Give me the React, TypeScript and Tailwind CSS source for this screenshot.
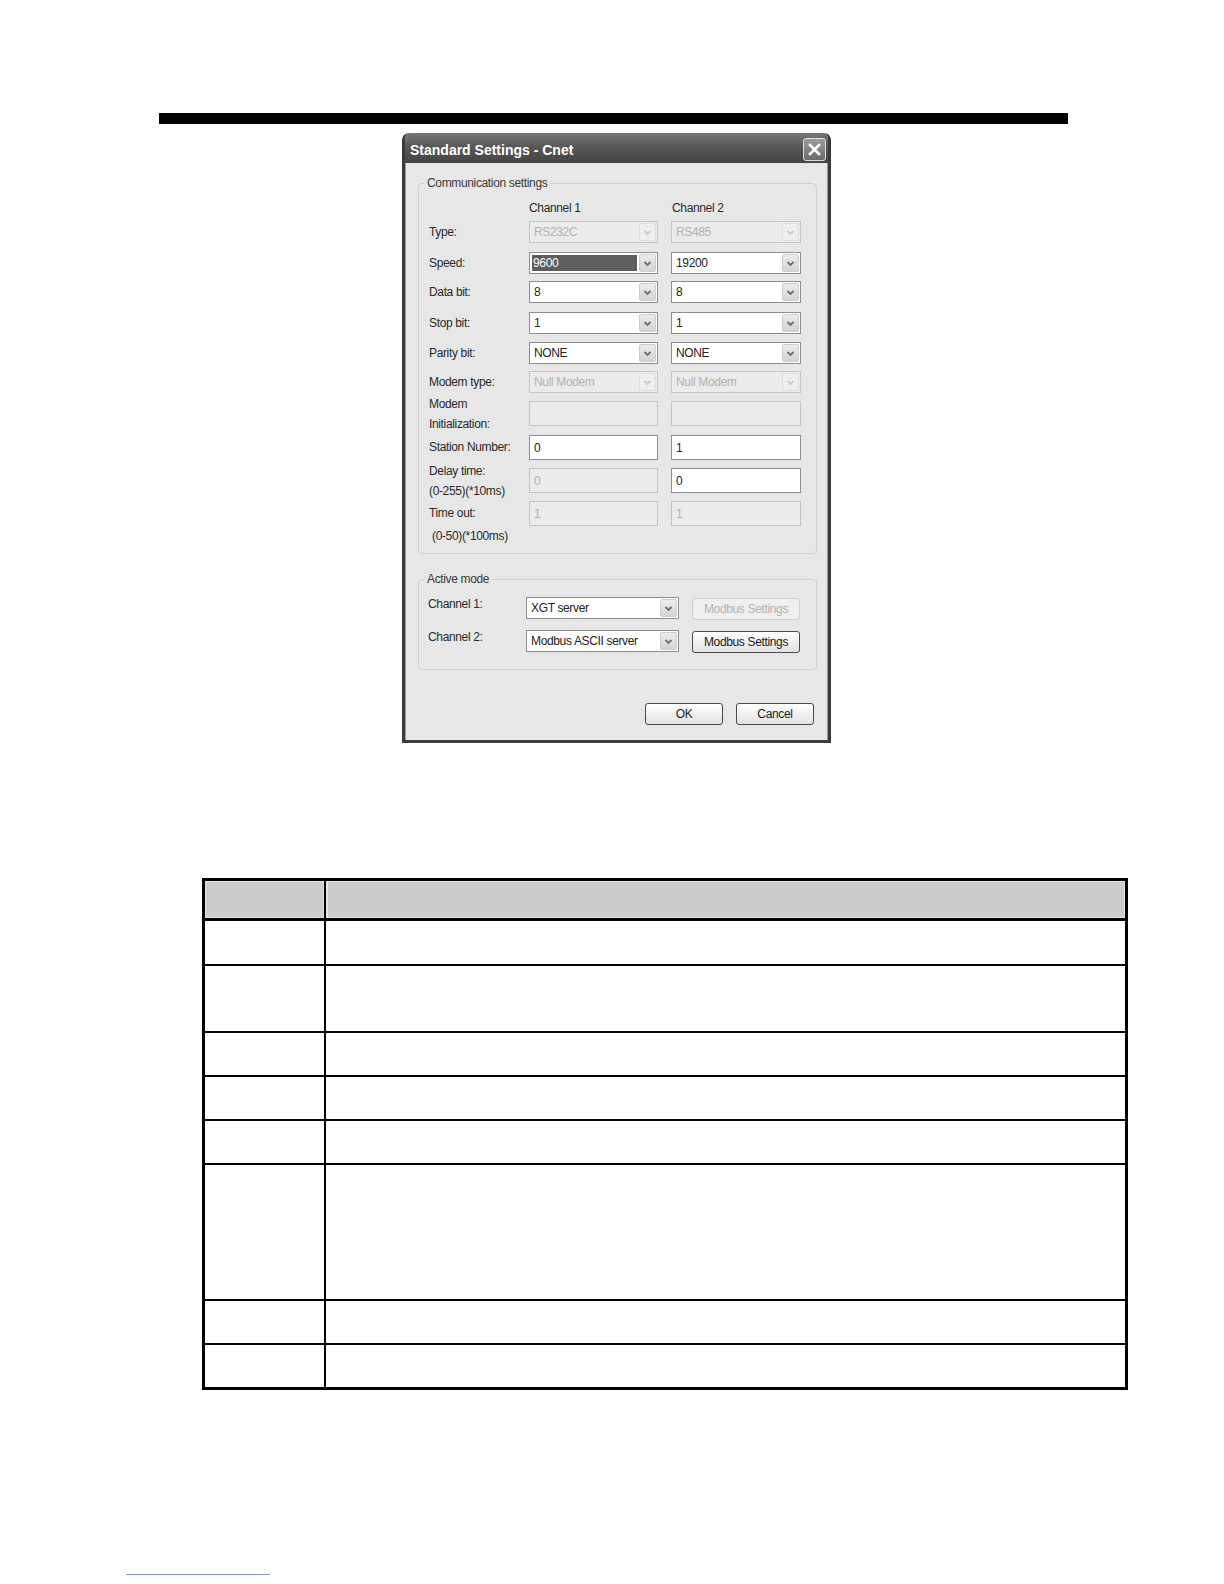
import React from 'react';

const ui = { fontFamily: '"Liberation Sans", Arial, sans-serif' };

const Arrow: React.FC<{ disabled?: boolean }> = ({ disabled }) => (
    <div
        className={`mr-px flex h-[18px] w-[17px] shrink-0 items-center justify-center rounded-[2px] border ${
            disabled ? 'border-[#dedede] bg-[#eeeeee]' : 'border-[#cdcdcd] bg-gradient-to-b from-[#ececec] to-[#d4d4d4]'
        }`}
    >
        <svg width="9" height="7" viewBox="0 0 9 7">
            <path d="M1.5 2 L4.5 5 L7.5 2" fill="none" stroke={disabled ? '#cacaca' : '#6e6e6e'} strokeWidth="1.8" />
        </svg>
    </div>
);

const Combo: React.FC<{ value: string; disabled?: boolean; selected?: boolean; w: string }> = ({
    value,
    disabled,
    selected,
    w,
}) => (
    <div
        className={`flex h-[22px] items-center border ${w} ${
            disabled ? 'border-[#c6c6c6] bg-[#ebebeb] text-[#b2b2b2]' : 'border-[#8e8e8e] bg-white text-[#222]'
        }`}
    >
        <div className="flex h-full flex-1 items-center py-[2px] pl-[2px] pr-[2px]">
            {selected ? (
                <span className="flex h-full w-full items-center bg-[#5e5e5e] pl-px text-white">{value}</span>
            ) : (
                <span className="pl-[2px]">{value}</span>
            )}
        </div>
        <Arrow disabled={disabled} />
    </div>
);

const TextBox: React.FC<{ value?: string; disabled?: boolean; w: string }> = ({ value, disabled, w }) => (
    <div
        className={`flex h-[25px] items-start border pl-[4px] pt-[3px] ${w} ${
            disabled ? 'border-[#c3c3c3] bg-[#ebebeb] text-[#b2b2b2]' : 'border-[#8e8e8e] bg-white text-[#222]'
        }`}
    >
        {value}
    </div>
);

const Button: React.FC<{ label: string; disabled?: boolean; w: string }> = ({ label, disabled, w }) => (
    <div
        className={`flex h-[22px] items-center justify-center rounded-[3px] border ${w} ${
            disabled
                ? 'border-[#cfcfcf] bg-[#efefef] text-[#b2b2b2]'
                : 'border-[#4a4a4a] bg-gradient-to-b from-white to-[#e2e2e2] text-[#1a1a1a]'
        }`}
    >
        {label}
    </div>
);

const Label: React.FC<{ children: React.ReactNode; className?: string }> = ({ children, className = '' }) => (
    <div className={`w-[100px] shrink-0 text-[#2a2a2a] ${className}`}>{children}</div>
);

const ComboRow: React.FC<{ label: string; h: string; a: React.ReactNode; b: React.ReactNode }> = ({ label, h, a, b }) => (
    <div className={`flex items-start ${h}`}>
        <Label className="leading-[22px]">{label}</Label>
        <div className="flex gap-[13px]">
            {a}
            {b}
        </div>
    </div>
);

const CommSettings: React.FC = () => (
    <fieldset className="rounded-[4px] border border-[#cfcfcf] pb-[7px] pl-[10px]">
        <legend className="-ml-[5px] px-[3px] leading-[15px] text-[#3a3a3a]">Communication settings</legend>

        <div className="flex pt-[10px] leading-[15px] text-[#2a2a2a]">
            <div className="w-[100px]" />
            <div className="w-[143px]">Channel 1</div>
            <div>Channel 2</div>
        </div>

        <div className="mt-[5px] flex flex-col">
            <ComboRow
                label="Type:"
                h="h-[31px]"
                a={<Combo value="RS232C" disabled w="w-[129px]" />}
                b={<Combo value="RS485" disabled w="w-[130px]" />}
            />
            <ComboRow
                label="Speed:"
                h="h-[29px]"
                a={<Combo value="9600" selected w="w-[129px]" />}
                b={<Combo value="19200" w="w-[130px]" />}
            />
            <ComboRow
                label="Data bit:"
                h="h-[31px]"
                a={<Combo value="8" w="w-[129px]" />}
                b={<Combo value="8" w="w-[130px]" />}
            />
            <ComboRow
                label="Stop bit:"
                h="h-[30px]"
                a={<Combo value="1" w="w-[129px]" />}
                b={<Combo value="1" w="w-[130px]" />}
            />
            <ComboRow
                label="Parity bit:"
                h="h-[29px]"
                a={<Combo value="NONE" w="w-[129px]" />}
                b={<Combo value="NONE" w="w-[130px]" />}
            />
            <ComboRow
                label="Modem type:"
                h="h-[30px]"
                a={<Combo value="Null Modem" disabled w="w-[129px]" />}
                b={<Combo value="Null Modem" disabled w="w-[130px]" />}
            />

            {/* text boxes */}
            <div className="flex h-[34px] items-start">
                <Label className="-mt-[7px] leading-[20px]">
                    Modem
                    <br />
                    Initialization:
                </Label>
                <div className="flex gap-[13px]">
                    <TextBox disabled w="w-[129px]" />
                    <TextBox disabled w="w-[130px]" />
                </div>
            </div>
            <div className="flex h-[33px] items-start">
                <Label className="leading-[25px]">Station Number:</Label>
                <div className="flex gap-[13px]">
                    <TextBox value="0" w="w-[129px]" />
                    <TextBox value="1" w="w-[130px]" />
                </div>
            </div>
            <div className="flex h-[33px] items-start">
                <Label className="-mt-[7px] leading-[20px]">
                    Delay time:
                    <br />
                    (0-255)(*10ms)
                </Label>
                <div className="flex gap-[13px]">
                    <TextBox value="0" disabled w="w-[129px]" />
                    <TextBox value="0" w="w-[130px]" />
                </div>
            </div>
            <div className="flex h-[25px] items-start">
                <Label className="leading-[25px]">Time out:</Label>
                <div className="flex gap-[13px]">
                    <TextBox value="1" disabled w="w-[129px]" />
                    <TextBox value="1" disabled w="w-[130px]" />
                </div>
            </div>
            <div className="pl-[3px] leading-[20px] text-[#2a2a2a]">(0-50)(*100ms)</div>
        </div>
    </fieldset>
);

const ActiveMode: React.FC = () => (
    <fieldset className="mt-[18px] rounded-[4px] border border-[#cfcfcf] pb-[16px] pl-[9px]">
        <legend className="-ml-[4px] px-[3px] leading-[15px] text-[#3a3a3a]">Active mode</legend>
        <div className="mt-[10px] flex h-[33px] items-start">
            <div className="w-[98px] leading-[15px] text-[#2a2a2a]">Channel 1:</div>
            <div className="flex items-start gap-[13px]">
                <Combo value="XGT server" w="w-[153px]" />
                <div className="mt-px">
                    <Button label="Modbus Settings" disabled w="w-[108px]" />
                </div>
            </div>
        </div>
        <div className="flex h-[23px] items-start">
            <div className="w-[98px] leading-[15px] text-[#2a2a2a]">Channel 2:</div>
            <div className="flex items-start gap-[13px]">
                <Combo value="Modbus ASCII server" w="w-[153px]" />
                <div className="mt-px">
                    <Button label="Modbus Settings" w="w-[108px]" />
                </div>
            </div>
        </div>
    </fieldset>
);

const Dialog: React.FC = () => (
    <div
        className="ml-[402px] mt-[9px] flex h-[610px] w-[429px] flex-col overflow-hidden rounded-t-[7px] border-x-[3px] border-b-[3px] border-[#3b3b3b] bg-[#e7e7e7] text-[12px] tracking-[-0.35px]"
        style={ui}
    >
        <div className="flex h-[30px] shrink-0 items-start justify-between bg-gradient-to-b from-[#767676] via-[#555555] to-[#454545] pl-[5px] pr-[2px] pt-[5px]">
            <span className="text-[14px] font-bold leading-[25px] tracking-[0px] text-white">Standard Settings - Cnet</span>
            <div className="flex h-[23px] w-[23px] items-center justify-center rounded-[3px] border border-[#dcdcdc] bg-gradient-to-b from-[#9c9c9c] to-[#6c6c6c]">
                <svg width="13" height="13" viewBox="0 0 13 13">
                    <path d="M2 2 L11 11 M11 2 L2 11" stroke="white" strokeWidth="2.6" strokeLinecap="square" />
                </svg>
            </div>
        </div>

        <div className="flex flex-1 flex-col border-x border-[#9a9a9a] pl-[12px] pr-[10px] pt-[13px]">
            <CommSettings />
            <ActiveMode />
            <div className="mt-[33px] flex justify-end gap-[13px] pr-[3px]">
                <Button label="OK" w="w-[78px]" />
                <Button label="Cancel" w="w-[78px]" />
            </div>
        </div>
    </div>
);

const rows = ['h-[45px]', 'h-[67px]', 'h-[44px]', 'h-[44px]', 'h-[44px]', 'h-[136px]', 'h-[44px]', 'h-[42px]'];

const SettingsTable: React.FC = () => (
    <div className="ml-[202px] mt-[135px] w-[926px] border-[3px] border-black">
        <div className="flex h-[40px] border-b-[3px] border-black bg-[#cccccc]">
            <div className="w-[121px] border-r-2 border-black shadow-[inset_1px_1px_0_#e4e4e4,inset_-1px_-1px_0_#e4e4e4]" />
            <div className="flex-1 shadow-[inset_2px_1px_0_#e4e4e4,inset_-1px_-1px_0_#e4e4e4]" />
        </div>
        {rows.map((h, i) => (
            <div key={i} className={`flex ${h} ${i < rows.length - 1 ? 'border-b-2 border-black' : ''}`}>
                <div className="w-[121px] border-r-2 border-black" />
                <div className="flex-1" />
            </div>
        ))}
    </div>
);

export default function App() {
    return (
        <div className="w-full bg-white pb-[10px] pt-[113px]">
            <div className="ml-[159px] h-[11px] w-[909px] bg-black" />
            <Dialog />
            <SettingsTable />
            <div className="ml-[126px] mt-[184px] h-px w-[144px] bg-[#8f9ad8]" />
        </div>
    );
}
